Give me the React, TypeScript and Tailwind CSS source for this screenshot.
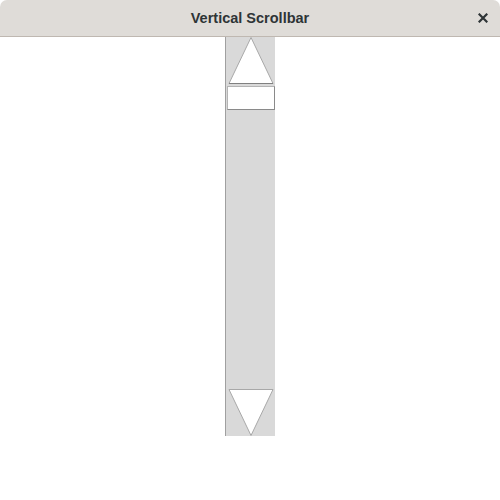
export default function App() {
  return (
    <div className="w-[500px] h-[500px] bg-white flex flex-col" style={{ fontFamily: '"DejaVu Sans", sans-serif' }}>
      <div className="h-[37px] shrink-0 bg-[#dfdcd8] border-b border-[#bfb8b1] rounded-t-[7px] flex items-center justify-center relative">
        <span className="text-[14.5px] font-bold text-[#2e3436] mt-[1px]" style={{ fontFamily: '"Liberation Sans", sans-serif' }}>Vertical Scrollbar</span>
        <svg className="absolute left-[478px] top-[13px]" width="10" height="10" viewBox="0 0 10 10">
          <path d="M1.5 1.5 L8.5 8.5 M8.5 1.5 L1.5 8.5" stroke="#2e3436" strokeWidth="2.2" strokeLinecap="square" />
        </svg>
      </div>
      <div className="flex justify-center">
        <div className="w-[50px] h-[399px] bg-[#d9d9d9] border-l border-[#a0a0a0] flex flex-col items-center">
          <svg width="48" height="48" viewBox="0 0 48 48" className="shrink-0">
            <polygon points="24,0.5 2,46.5 46,46.5" fill="#ffffff" stroke="#a8a8a8" strokeWidth="1" />
            <line x1="2" y1="46.5" x2="46" y2="46.5" stroke="#808080" strokeWidth="1" />
          </svg>
          <div className="mt-[1px] w-[48px] h-[24px] bg-white border border-[#b4b4b4] border-b-[#8a8a8a] border-r-[#8a8a8a]" />
          <div className="flex-1" />
          <svg width="48" height="48" viewBox="0 0 48 48" className="shrink-0">
            <polygon points="2,1.5 46,1.5 24,47.5" fill="#ffffff" stroke="#a8a8a8" strokeWidth="1" />
          </svg>
        </div>
      </div>
    </div>
  );
}
